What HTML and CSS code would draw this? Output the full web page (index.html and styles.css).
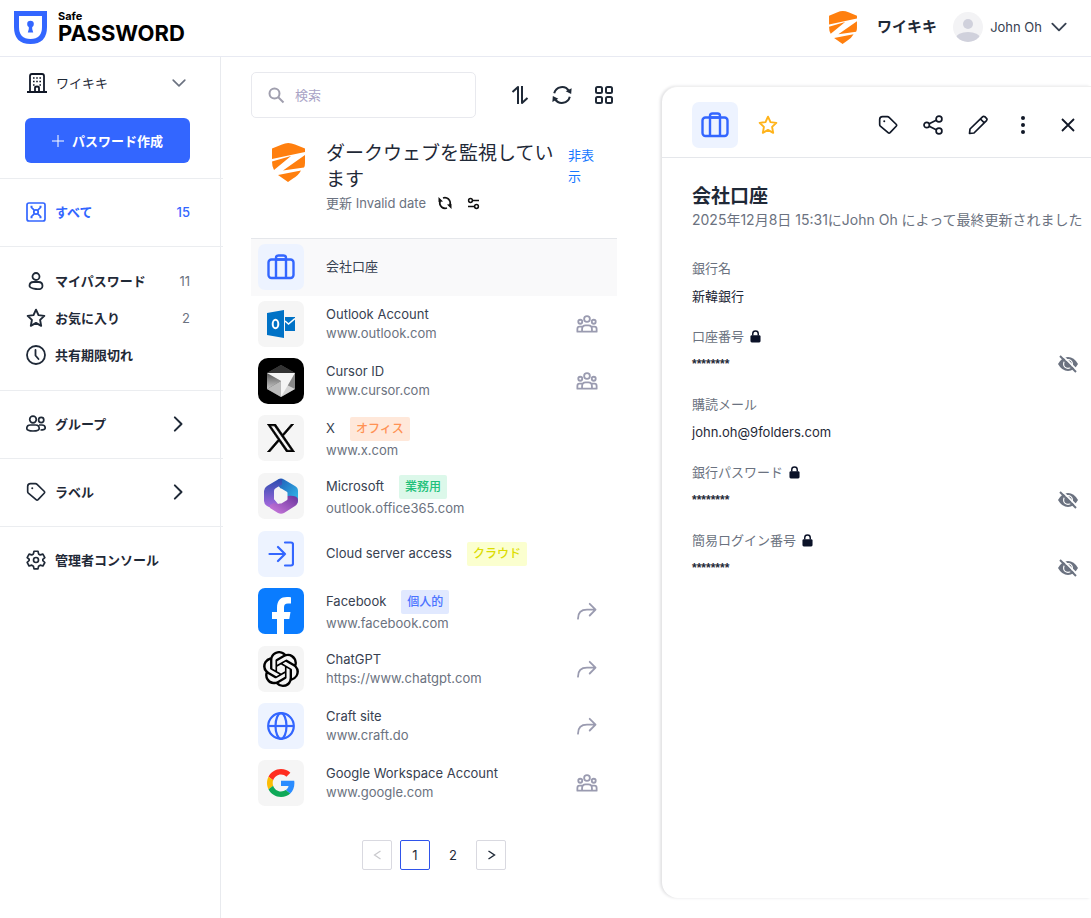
FILE: index.html
```html
<!DOCTYPE html>
<html lang="ja">
<head>
    <meta charset="UTF-8">
    <meta name="viewport" content="width=device-width, initial-scale=1.0">
    <title>Safe PASSWORD</title>
    <link rel="stylesheet" href="styles.css">
</head>
<body>
    <!-- shared icons -->
    <svg class="sprite" aria-hidden="true">
        <symbol id="i-shield" viewBox="0 0 33 39">
            <path fill="#ff7f0e" d="M0 5.500 10 1.500q6-3 13 0L33 5.500v3.500L0 16zM0 18.500 19 13 2 27Q0 24 0 18.500zM33 12v8q0 3-1 4.500L11 27.500zM6 32l23-4.500q-3 5.500-8 8l-5 3.500z"/>
        </symbol>
        <symbol id="i-case" viewBox="0 0 28 26">
            <g fill="none" stroke="#3366ff" stroke-width="2.400"><rect x="1.500" y="5.500" width="25" height="18.500" rx="3"/><path d="M9 24V4q0-2.500 2.500-2.500h5Q19 1.500 19 4v20M9 5.500h10"/></g>
        </symbol>
        <symbol id="i-star" viewBox="0 0 24 24">
            <path fill="none" stroke="currentColor" stroke-width="2.300" stroke-linejoin="round" d="m12 2 3 6.500 7 .9-5.100 4.900 1.300 7.100-6.200-3.500-6.200 3.500 1.300-7.100L2 9.400l7-.9z"/>
        </symbol>
        <symbol id="i-tag" viewBox="0 0 24 24">
            <path fill="none" stroke="currentColor" stroke-width="2" stroke-linejoin="round" d="M2 5.500Q2 2 5.500 2h5.800q1.200 0 2 .8l8.500 8.300q1.200 1.200 0 2.400l-7.300 7.700q-1.200 1.200-2.400 0L2.800 13.300Q2 12.500 2 11.300z"/><circle cx="7.500" cy="7.500" r="1.200" fill="currentColor"/>
        </symbol>
        <symbol id="i-right" viewBox="0 0 24 24"><path fill="none" stroke="currentColor" stroke-width="2.400" stroke-linecap="round" stroke-linejoin="round" d="m7 4 8 8-8 8"/></symbol>
        <symbol id="i-down" viewBox="0 0 24 24"><path fill="none" stroke="currentColor" stroke-width="2.800" stroke-linecap="round" stroke-linejoin="round" d="m2 7 10 10L22 7"/></symbol>
        <symbol id="i-group" viewBox="0 0 24 20">
            <g fill="none" stroke="currentColor" stroke-width="2" stroke-linejoin="round"><circle cx="12" cy="4.500" r="3.200"/><circle cx="4.500" cy="7.500" r="2.200"/><circle cx="19.500" cy="7.500" r="2.200"/><path d="M6.500 18.500v-2.500q0-4.500 4-4.500h3q4 0 4 4.500v2.500zM6.500 18.500H1.300v-3q0-2.500 2.500-2.500h3.400M17.500 18.500h5.200v-3q0-2.500-2.500-2.500h-3.400"/></g>
        </symbol>
        <symbol id="i-share" viewBox="0 0 24 20">
            <path fill="none" stroke="currentColor" stroke-width="2" stroke-linecap="round" stroke-linejoin="round" d="M2 18.500C2 11.500 6 8.500 12 8.500h9M15 2l6.500 6.500L15 15"/>
        </symbol>
        <symbol id="i-lock" viewBox="0 0 12 14">
            <rect x="0.500" y="5.500" width="11" height="8" rx="1.500" fill="#0b1228"/><path d="M3 6V4a3 3 0 0 1 6 0v2" fill="none" stroke="#0b1228" stroke-width="1.600"/>
        </symbol>
        <symbol id="i-hidden" viewBox="0 0 20 18">
            <path fill="#6b7280" d="M0 9Q4 2 10 2t10 7q-4 7-10 7T0 9z"/><circle cx="10" cy="9" r="4.400" fill="none" stroke="#fff" stroke-width="1.200"/><path d="M4.500.5 20 16" stroke="#fff" stroke-width="1.800"/><path d="M2 1 18 17" stroke="#6b7280" stroke-width="2"/>
        </symbol>
        <symbol id="i-refresh" viewBox="0 0 24 24">
            <path fill="none" stroke="currentColor" stroke-width="2.200" d="M3.500 10a8.800 8.800 0 0 1 16-2.500M20.500 14a8.800 8.800 0 0 1-16 2.500"/><path fill="currentColor" d="m22.500 4.500-.5 6.500-6-3zM1.500 19.500l.5-6.500 6 3z"/>
        </symbol>
    </svg>

    <header class="topbar">
        <a class="logo" href="#">
            <svg width="33" height="33" viewBox="0 0 33 33"><path fill="#3366ff" d="M0 0h33v16Q33 33 16.500 33T0 16z"/><path fill="#fff" d="M5 5h23v11q0 12-11.500 12T5 16z"/><circle cx="16.500" cy="13" r="3.300" fill="#3366ff"/><path fill="#3366ff" d="M14.800 14h3.400v4l1 3.500h-5.400l1-3.500z"/></svg>
            <span class="logo-text"><span class="logo-small">Safe</span><span class="logo-big">PASSWORD</span></span>
        </a>
        <div class="account">
            <svg width="28" height="33"><use href="#i-shield"/></svg>
            <strong class="org">ワイキキ</strong>
            <button class="user" type="button">
                <svg width="30" height="30" viewBox="0 0 30 30"><defs><clipPath id="round"><circle cx="15" cy="15" r="15"/></clipPath></defs><g clip-path="url(#round)"><path fill="#f3f3f5" d="M0 0h30v30H0z"/><circle cx="15" cy="12" r="5" fill="#d0d1dc"/><ellipse cx="15" cy="26" rx="12" ry="6" fill="#d0d1dc"/></g></svg>
                <span>John Oh</span>
                <svg width="16" height="16"><use href="#i-down"/></svg>
            </button>
        </div>
    </header>

    <div class="layout">
        <nav class="sidebar">
            <div class="side-top">
                <button class="company" type="button">
                    <svg width="20" height="20" viewBox="0 0 20 20"><g fill="none" stroke="#111827" stroke-width="1.800"><path d="M3 18.500V3q0-2 2-2h10q2 0 2 2v15.500M0 19h20M8 19v-4q0-1.500 2-1.500t2 1.500v4"/></g><path stroke="#111827" stroke-width="1.500" d="M6 5h1.600M9.200 5h1.600M12.400 5H14M6 8.500h1.600M9.200 8.500h1.600M12.400 8.500H14M6 12h1.600M12.400 12H14"/></svg>
                    <span>ワイキキ</span>
                    <svg class="end gray" width="14" height="14"><use href="#i-down"/></svg>
                </button>
                <button class="create" type="button">
                    <svg width="12" height="12" viewBox="0 0 12 12"><path stroke="#fff" stroke-width="1" d="M6 0v12M0 6h12"/></svg>
                    パスワード作成
                </button>
            </div>
            <div class="side-group">
                <a class="side-link active" href="#">
                    <svg width="20" height="20" viewBox="0 0 20 20"><g fill="none" stroke="currentColor" stroke-width="1.700"><rect x="1" y="1" width="18" height="18" rx="2"/><path d="m5 5 3.200 3.200M15 5l-3.200 3.200M5 15l3.200-3.200M15 15l-3.200-3.200M4.500 4.500h2M15.500 4.500h-2M4.500 15.500h2M15.500 15.500h-2"/><circle cx="10" cy="10" r="2.200"/></g></svg>
                    <span>すべて</span><span class="count">15</span>
                </a>
            </div>
            <div class="side-group tall">
                <a class="side-link" href="#">
                    <svg width="20" height="20" viewBox="0 0 20 20"><g fill="none" stroke="currentColor" stroke-width="1.800"><circle cx="10" cy="5.500" r="3.500"/><path d="M3.500 15q0-4 4-4h5q4 0 4 4t-6.500 3-6.500-3z"/></g></svg>
                    <span>マイパスワード</span><span class="count">11</span>
                </a>
                <a class="side-link" href="#">
                    <svg width="20" height="20"><use href="#i-star"/></svg>
                    <span>お気に入り</span><span class="count">2</span>
                </a>
                <a class="side-link" href="#">
                    <svg width="20" height="20" viewBox="0 0 20 20"><g fill="none" stroke="currentColor" stroke-width="1.800" stroke-linecap="round"><circle cx="10" cy="10" r="9"/><path d="M9.500 5v5.500l3 3.500"/></g></svg>
                    <span>共有期限切れ</span>
                </a>
            </div>
            <div class="side-group">
                <a class="side-link" href="#">
                    <svg width="20" height="20" viewBox="0 0 20 20"><g fill="none" stroke="currentColor" stroke-width="1.700"><circle cx="7" cy="5.500" r="3.300"/><path d="M.8 14.500q0-3.500 3.500-3.500h5.400q3.500 0 3.500 3.500 0 2.500-6.200 2.500T.8 14.500z"/><circle cx="15.200" cy="6" r="2.600"/><path d="M13 11h3q3.200 0 3.200 3 0 2-4.700 2"/></g></svg>
                    <span>グループ</span><svg class="end" width="20" height="20"><use href="#i-right"/></svg>
                </a>
            </div>
            <div class="side-group">
                <a class="side-link" href="#">
                    <svg width="20" height="20"><use href="#i-tag"/></svg>
                    <span>ラベル</span><svg class="end" width="20" height="20"><use href="#i-right"/></svg>
                </a>
            </div>
            <div class="side-group last">
                <a class="side-link" href="#">
                    <svg width="20" height="20" viewBox="0 0 24 24"><g fill="none" stroke="currentColor" stroke-width="2" stroke-linejoin="round"><circle cx="12" cy="12" r="3"/><path d="M9.600 1.500h4.800l.7 3.200 2 1.200 3.200-1 2.300 4.200-2.400 2.200v1.500l2.400 2.200-2.300 4.200-3.200-1-2 1.200-.7 3.200H9.600l-.7-3.200-2-1.200-3.200 1L1.400 14.800l2.400-2.200v-1.500L1.400 9.100l2.300-4.200 3.200 1 2-1.200z"/></g></svg>
                    <span>管理者コンソール</span>
                </a>
            </div>
        </nav>

        <main class="list-pane">
            <div class="toolbar">
                <label class="search">
                    <svg width="17" height="17" viewBox="0 0 17 17"><g fill="none" stroke="#a09fae" stroke-width="2"><circle cx="6.500" cy="6.500" r="5"/><path d="m10 10 5.500 5.500"/></g></svg>
                    <input type="text" placeholder="検索" aria-label="検索">
                </label>
                <div class="tools">
                    <button type="button" aria-label="並べ替え"><svg width="18" height="20" viewBox="0 0 18 20"><path fill="none" stroke="currentColor" stroke-width="2" stroke-linejoin="round" d="M1.500 7 7 2v17M11 1v17l5.500-5"/></svg></button>
                    <button type="button" aria-label="更新"><svg width="22" height="22"><use href="#i-refresh"/></svg></button>
                    <button type="button" aria-label="グリッド表示"><svg width="18" height="18" viewBox="0 0 18 18"><g fill="none" stroke="currentColor" stroke-width="2"><rect x="1" y="1" width="6" height="6" rx="1.500"/><rect x="11" y="1" width="6" height="6" rx="1.500"/><rect x="1" y="11" width="6" height="6" rx="1.500"/><rect x="11" y="11" width="6" height="6" rx="1.500"/></g></svg></button>
                </div>
            </div>

            <section class="monitor">
                <svg class="monitor-icon" width="33" height="39"><use href="#i-shield"/></svg>
                <div class="monitor-body">
                    <h2>ダークウェブを監視しています</h2>
                    <div class="monitor-sub">
                        <span>更新 Invalid date</span>
                        <button type="button" aria-label="再読み込み"><svg width="14" height="14" viewBox="0 0 14 14"><path fill="none" stroke="#111" stroke-width="1.700" d="M5 2q3-1 5.500 1Q13 5.500 12 9M9 12q-3 1-5.500-1Q1 8.500 2 5"/><path fill="#111" d="M.5 1v5L5 5.500zM13.500 13V8L9 8.500z"/></svg></button>
                        <button type="button" aria-label="設定"><svg width="13" height="13" viewBox="0 0 13 13"><g fill="none" stroke="#111" stroke-width="1.500"><circle cx="3.500" cy="3.500" r="1.900"/><path d="M5.500 3.500H12M1 9.500h6.500"/><circle cx="9.500" cy="9.500" r="1.900"/></g></svg></button>
                    </div>
                </div>
                <a class="hide-link" href="#">非表示</a>
            </section>

            <ul class="items">
                <li><a class="item selected" href="#">
                    <span class="tile blue"><svg width="28" height="26"><use href="#i-case"/></svg></span>
                    <span class="item-text"><span class="name">会社口座</span></span>
                </a></li>
                <li><a class="item" href="#">
                    <span class="tile"><svg width="28" height="28" viewBox="0 0 28 28"><path fill="#0072c6" d="M0 3 17 0v28L0 25zM18 7h10v14H18z"/><ellipse cx="8.500" cy="14" rx="2.800" ry="4.300" fill="none" stroke="#fff" stroke-width="2"/><path fill="none" stroke="#fff" stroke-width="1.600" d="m18 11 3.500 3L28 8.500"/></svg></span>
                    <span class="item-text"><span class="name">Outlook Account</span><span class="url">www.outlook.com</span></span>
                    <svg class="state" width="22" height="18"><use href="#i-group"/></svg>
                </a></li>
                <li><a class="item" href="#">
                    <span class="tile black"><svg width="28" height="32" viewBox="0 0 28 32"><defs><linearGradient id="cube" x1="0" y1="0" x2="0" y2="1"><stop offset="0" stop-color="#555"/><stop offset="1" stop-color="#c8c8c8"/></linearGradient></defs><path fill="#555" d="m14 0 14 8v16l-14 8L0 24V8z"/><path fill="#333" d="m14 0 14 8H0z"/><path fill="url(#cube)" d="M0 8v16l14-8z"/><path fill="#bbb" d="m0 24 14-8v16z"/><path fill="#888" d="M28 8v16l-9-2z"/><path fill="#d5d5d5" d="m14 32 14-8-10-5z"/><path fill="#f5f5f5" d="M0 8h28L14 32V16z"/></svg></span>
                    <span class="item-text"><span class="name">Cursor ID</span><span class="url">www.cursor.com</span></span>
                    <svg class="state" width="22" height="18"><use href="#i-group"/></svg>
                </a></li>
                <li><a class="item tagged" href="#">
                    <span class="tile"><svg width="28" height="28" viewBox="0 0 24 24"><path stroke="#000" stroke-width="0.600" d="M14.234 10.162 22.977 0h-2.072l-7.591 8.824L7.251 0H.258l9.168 13.343L.258 24H2.330l8.016-9.318L16.749 24h6.993zm-2.837 3.299-.929-1.329L3.076 1.560h3.182l5.965 8.532.929 1.329 7.754 11.090h-3.182z"/></svg></span>
                    <span class="item-text"><span class="name">X<span class="tag orange">オフィス</span></span><span class="url">www.x.com</span></span>
                </a></li>
                <li><a class="item tagged" href="#">
                    <span class="tile"><svg width="34" height="36" viewBox="0 0 34 36"><defs><linearGradient id="ms1" x1="0" y1="0" x2="0" y2="1"><stop offset="0" stop-color="#2b4db0"/><stop offset="1" stop-color="#b06be0"/></linearGradient><linearGradient id="ms2" x1="0" y1="0" x2="1" y2="1"><stop offset="0" stop-color="#1d58b5"/><stop offset="1" stop-color="#35c0ee"/></linearGradient><linearGradient id="ms3" x1="1" y1="0" x2="0" y2="1"><stop offset="0" stop-color="#69339c"/><stop offset="1" stop-color="#cf7de0"/></linearGradient></defs><path fill="url(#ms2)" d="m14 1.500q3-2 6 0L31 8q3 1.500 3 5v9q0 3-2 4l-9-6v-5l-6-4-4-5z"/><path fill="url(#ms1)" d="M14 1.500 3 8q-3 2-3 5v10q0 3 3 5l6 3 5-5-4-5v-8q0-2 2-3l6-3.500V1z"/><path fill="url(#ms3)" d="m6 30 8 5q3 1.500 6 0l11-7q3-2 3-6 0-5-11-4v3l-6 4q-4 2-7 0l-4 2z"/><path fill="#f5f5f5" d="m17 12 5 3v6l-5 3-5-3v-6z" stroke="#f5f5f5" stroke-width="3" stroke-linejoin="round"/></svg></span>
                    <span class="item-text"><span class="name">Microsoft<span class="tag green">業務用</span></span><span class="url">outlook.office365.com</span></span>
                </a></li>
                <li><a class="item" href="#">
                    <span class="tile blue"><svg width="26" height="26" viewBox="0 0 26 26"><path fill="none" stroke="#3366ff" stroke-width="2.200" stroke-linecap="round" stroke-linejoin="round" d="M1.500 13H17M10 6l7 7-7 7M17 1.500h6q2 0 2 2v19q0 2-2 2h-6"/></svg></span>
                    <span class="item-text"><span class="name">Cloud server access<span class="tag yellow">クラウド</span></span></span>
                </a></li>
                <li><a class="item tagged" href="#">
                    <span class="tile facebook"><svg width="46" height="46" viewBox="0 0 46 46"><path fill="#fff" d="M19 46V31h-5v-7h5v-4c0-8 4-11 10-11 2 0 3 0 4 .3v6.200h-3c-3 0-4 1.500-4 4V24h6.500l-1.200 7H26v15z"/></svg></span>
                    <span class="item-text"><span class="name">Facebook<span class="tag indigo">個人的</span></span><span class="url">www.facebook.com</span></span>
                    <svg class="state" width="22" height="18"><use href="#i-share"/></svg>
                </a></li>
                <li><a class="item" href="#">
                    <span class="tile"><svg width="36" height="36" viewBox="0 0 24 24"><path d="M22.2819 9.8211a5.9847 5.9847 0 0 0-.5157-4.9108 6.0462 6.0462 0 0 0-6.5098-2.9A6.0651 6.0651 0 0 0 4.9807 4.1818a5.9847 5.9847 0 0 0-3.9977 2.9 6.0462 6.0462 0 0 0 .7427 7.0966 5.98 5.98 0 0 0 .511 4.9107 6.051 6.051 0 0 0 6.5146 2.9001A5.9847 5.9847 0 0 0 13.2599 24a6.0557 6.0557 0 0 0 5.7718-4.2058 5.9894 5.9894 0 0 0 3.9977-2.9001 6.0557 6.0557 0 0 0-.7475-7.0729zm-9.022 12.6081a4.4755 4.4755 0 0 1-2.8764-1.0408l.1419-.0804 4.7783-2.7582a.7948.7948 0 0 0 .3927-.6813v-6.7369l2.02 1.1686a.071.071 0 0 1 .038.052v5.5826a4.504 4.504 0 0 1-4.4945 4.4944zm-9.6607-4.1254a4.4708 4.4708 0 0 1-.5346-3.0137l.142.0852 4.783 2.7582a.7712.7712 0 0 0 .7806 0l5.8428-3.3685v2.3324a.0804.0804 0 0 1-.0332.0615L9.74 19.9502a4.4992 4.4992 0 0 1-6.1408-1.6464zM2.3408 7.8956a4.485 4.485 0 0 1 2.3655-1.9728V11.6a.7664.7664 0 0 0 .3879.6765l5.8144 3.3543-2.0201 1.1685a.0757.0757 0 0 1-.071 0l-4.8303-2.7865A4.504 4.504 0 0 1 2.3408 7.872zm16.5963 3.8558L13.1038 8.364 15.1192 7.2a.0757.0757 0 0 1 .071 0l4.8303 2.7913a4.4944 4.4944 0 0 1-.6765 8.1042v-5.6772a.79.79 0 0 0-.407-.667zm2.0107-3.0231l-.142-.0852-4.7735-2.7818a.7759.7759 0 0 0-.7854 0L9.409 9.2297V6.8974a.0662.0662 0 0 1 .0284-.0615l4.8303-2.7866a4.4992 4.4992 0 0 1 6.6802 4.66zM8.3065 12.863l-2.02-1.1638a.0804.0804 0 0 1-.038-.0567V6.0742a4.4992 4.4992 0 0 1 7.3757-3.4537l-.142.0805L8.704 5.459a.7948.7948 0 0 0-.3927.6813zm1.0976-2.3654l2.602-1.4998 2.6069 1.4998v2.9994l-2.5974 1.4997-2.6067-1.4997Z"/></svg></span>
                    <span class="item-text"><span class="name">ChatGPT</span><span class="url">https://www.chatgpt.com</span></span>
                    <svg class="state" width="22" height="18"><use href="#i-share"/></svg>
                </a></li>
                <li><a class="item" href="#">
                    <span class="tile blue"><svg width="28" height="28" viewBox="0 0 28 28"><g fill="none" stroke="#3366ff" stroke-width="2.200"><circle cx="14" cy="14" r="12.800"/><ellipse cx="14" cy="14" rx="5.500" ry="12.800"/><path d="M1 14h26"/></g></svg></span>
                    <span class="item-text"><span class="name">Craft site</span><span class="url">www.craft.do</span></span>
                    <svg class="state" width="22" height="18"><use href="#i-share"/></svg>
                </a></li>
                <li><a class="item" href="#">
                    <span class="tile"><svg width="28" height="28" viewBox="0 0 48 48"><path fill="#ff2d20" d="M24 9.500c3.540 0 6.710 1.220 9.210 3.600l6.850-6.850C35.900 2.380 30.470 0 24 0 14.620 0 6.510 5.380 2.560 13.220l7.980 6.190C12.430 13.720 17.740 9.500 24 9.500z"/><path fill="#2a8cff" d="M46.980 24.550c0-1.570-.15-3.090-.38-4.550H24v9.020h12.940c-.58 2.960-2.260 5.480-4.780 7.180l7.730 6c4.510-4.180 7.090-10.360 7.090-17.650z"/><path fill="#fbbc05" d="M10.530 28.590c-.48-1.450-.76-2.990-.76-4.590s.27-3.140.76-4.590l-7.980-6.190C.92 16.460 0 20.120 0 24c0 3.880.92 7.540 2.560 10.780z"/><path fill="#0fa958" d="M24 48c6.480 0 11.930-2.130 15.890-5.810l-7.730-6c-2.150 1.450-4.920 2.300-8.160 2.300-6.260 0-11.570-4.220-13.470-9.910l-7.980 6.190C6.510 42.620 14.620 48 24 48z"/></svg></span>
                    <span class="item-text"><span class="name">Google Workspace Account</span><span class="url">www.google.com</span></span>
                    <svg class="state" width="22" height="18"><use href="#i-group"/></svg>
                </a></li>
            </ul>

            <div class="pager">
                <button type="button" disabled aria-label="前へ"><svg width="9" height="10" viewBox="0 0 9 10"><path fill="none" stroke="currentColor" stroke-width="1.200" d="M7.500 1 1.500 5l6 4"/></svg></button>
                <button class="current" type="button">1</button>
                <button class="plain" type="button">2</button>
                <button type="button" aria-label="次へ"><svg width="9" height="10" viewBox="0 0 9 10"><path fill="none" stroke="currentColor" stroke-width="1.400" d="m1.500 1 6 4-6 4"/></svg></button>
            </div>
        </main>

        <section class="detail">
            <div class="detail-head">
                <span class="tile blue"><svg width="28" height="26"><use href="#i-case"/></svg></span>
                <button class="fav" type="button" aria-label="お気に入り"><svg width="20" height="20"><use href="#i-star"/></svg></button>
                <div class="actions">
                    <button type="button" aria-label="ラベル"><svg width="20" height="20"><use href="#i-tag"/></svg></button>
                    <button type="button" aria-label="共有"><svg width="20" height="20" viewBox="0 0 20 20"><g fill="none" stroke="currentColor" stroke-width="1.700"><circle cx="3.700" cy="10" r="2.700"/><circle cx="16" cy="4" r="2.900"/><circle cx="16" cy="16" r="2.900"/><path d="m6.200 8.800 7-3.500M6.200 11.200l7 3.500"/></g></svg></button>
                    <button type="button" aria-label="編集"><svg width="20" height="20" viewBox="0 0 20 20"><path fill="none" stroke="currentColor" stroke-width="1.700" stroke-linejoin="round" d="M1.500 18.500 2 14 14.500 1.800q1-1 2.500 0l1.500 1.500q1 1 0 2.300L6 18zM12.500 4l3.800 3.800"/></svg></button>
                    <button type="button" aria-label="その他"><svg width="6" height="20" viewBox="0 0 6 20"><g fill="currentColor"><circle cx="3" cy="3" r="2"/><circle cx="3" cy="10" r="2"/><circle cx="3" cy="17" r="2"/></g></svg></button>
                    <button type="button" aria-label="閉じる"><svg width="14" height="14" viewBox="0 0 14 14"><path stroke="currentColor" stroke-width="1.800" d="m1 1 12 12M13 1 1 13"/></svg></button>
                </div>
            </div>
            <div class="detail-body">
                <h1>会社口座</h1>
                <p class="updated">2025年12月8日 15:31にJohn Oh によって最終更新されました</p>
                <dl class="fields">
                    <div class="field"><dt>銀行名</dt><dd>新韓銀行</dd></div>
                    <div class="field"><dt>口座番号<svg width="11" height="13"><use href="#i-lock"/></svg></dt><dd><span class="secret">********</span><button type="button" aria-label="表示"><svg width="20" height="18"><use href="#i-hidden"/></svg></button></dd></div>
                    <div class="field"><dt>購読メール</dt><dd>john.oh@9folders.com</dd></div>
                    <div class="field"><dt>銀行パスワード<svg width="11" height="13"><use href="#i-lock"/></svg></dt><dd><span class="secret">********</span><button type="button" aria-label="表示"><svg width="20" height="18"><use href="#i-hidden"/></svg></button></dd></div>
                    <div class="field"><dt>簡易ログイン番号<svg width="11" height="13"><use href="#i-lock"/></svg></dt><dd><span class="secret">********</span><button type="button" aria-label="表示"><svg width="20" height="18"><use href="#i-hidden"/></svg></button></dd></div>
                </dl>
            </div>
        </section>
    </div>
</body>
</html>
```

FILE: styles.css
```css
* {
    box-sizing: border-box;
}

body {
    display: flex;
    flex-direction: column;
    min-height: 100vh;
    margin: 0;
    font-family: Inter, "Noto Sans CJK JP", sans-serif;
    font-size: 13px;
    line-height: 20px;
    color: #1f2937;
    background-color: #ffffff;
    overflow-x: hidden;
}

svg {
    display: block;
    flex: none;
}

.sprite {
    position: absolute;
    width: 0;
    height: 0;
}

a {
    color: inherit;
    text-decoration: none;
}

button {
    display: flex;
    align-items: center;
    justify-content: center;
    padding: 0;
    border: none;
    background: none;
    font: inherit;
    color: inherit;
    cursor: pointer;
}

h1, h2, p, ul, dl, dd {
    margin: 0;
    padding: 0;
}

/* top bar */
.topbar {
    display: flex;
    align-items: center;
    justify-content: space-between;
    height: 57px;
    padding: 0 24px 2px 14px;
    border-bottom: 1px solid #e8eaf2;
}

.logo {
    display: flex;
    align-items: center;
    gap: 11px;
    color: #000000;
}

.logo-text {
    display: flex;
    flex-direction: column;
    font-weight: 700;
}

.logo-small {
    font-size: 11px;
    line-height: 12px;
}

.logo-big {
    font-size: 22px;
    line-height: 22px;
}

.account {
    display: flex;
    align-items: center;
}

.org {
    margin: 0 16px 0 20px;
    font-size: 15px;
}

.user {
    gap: 7px;
    color: #374151;
}

.user span {
    margin-right: 2px;
}

/* page columns */
.layout {
    flex: 1;
    display: grid;
    grid-template-columns: 221px 441px minmax(0, 1fr);
}

/* sidebar */
.sidebar {
    border-right: 1px solid #e8eaee;
}

.side-top {
    margin-right: -3px;
    padding: 7px 33px 15px 25px;
    border-bottom: 1px solid #ebedf0;
}

.company {
    width: 100%;
    height: 37px;
    justify-content: flex-start;
    gap: 9px;
    padding: 0 4px 0 2px;
}

.end {
    margin-left: auto;
}

.gray {
    color: #6b7280;
}

.create {
    width: 100%;
    height: 45px;
    margin-top: 17px;
    gap: 8px;
    border-radius: 6px;
    background-color: #3366ff;
    color: #ffffff;
    font-weight: 700;
}

.side-group {
    margin-right: -3px;
    padding: 14px 33px 16px 26px;
    border-bottom: 1px solid #ebedf0;
}

.side-group.tall {
    padding-top: 15px;
    padding-bottom: 17px;
}

.side-group.last {
    border-bottom: none;
}

.side-link {
    display: flex;
    align-items: center;
    gap: 9px;
    height: 37px;
    font-weight: 700;
}

.side-link .end {
    margin-right: 1px;
}

.side-link.active {
    color: #3366ff;
}

.count {
    margin-left: auto;
    font-weight: 400;
    color: #6b7280;
}

.active .count {
    font-weight: 500;
    color: #3366ff;
}

/* list */
.list-pane {
    padding: 15px 45px 20px 30px;
}

.toolbar {
    display: flex;
    align-items: center;
    justify-content: space-between;
}

.search {
    display: flex;
    align-items: center;
    gap: 10px;
    width: 225px;
    height: 46px;
    padding: 0 16px;
    border: 1px solid #e8e9ee;
    border-radius: 5px;
}

.search input {
    width: 100%;
    border: none;
    outline: none;
    padding: 0;
    font: inherit;
}

.search input::placeholder {
    color: #a9a3c6;
    opacity: 1;
}

.tools, .actions {
    display: flex;
    gap: 18px;
}

.tools {
    margin-right: 1px;
}

.tools button, .actions button {
    width: 24px;
    height: 24px;
}

.monitor {
    display: flex;
    align-items: flex-start;
    padding: 23px 0 25px 21px;
}

.monitor-icon {
    margin: 2px 21px 0 0;
}

.monitor-body {
    flex: 1;
}

.monitor h2 {
    font-size: 19px;
    font-weight: 400;
    line-height: 26px;
}

.monitor-sub {
    display: flex;
    align-items: center;
    gap: 10px;
    height: 20px;
    color: #6b7280;
}

.monitor-sub button {
    width: 18px;
}

.hide-link {
    width: 30px;
    margin: 4px 19px 0 12px;
    line-height: 21px;
    color: #1677ff;
}

.items {
    list-style: none;
    border-top: 1px solid #e5e7eb;
}

.item {
    display: flex;
    align-items: center;
    min-height: 57px;
    padding: 4px 19px 6px 7px;
}

.item.tagged {
    min-height: 58px;
}

.item.selected {
    background-color: #f9f9fa;
}

.tile {
    display: flex;
    flex: none;
    align-items: center;
    justify-content: center;
    width: 46px;
    height: 46px;
    border-radius: 7px;
    background-color: #f5f5f5;
}

.tile.blue {
    background-color: #edf3ff;
}

.tile.black {
    border-radius: 10px;
    background-color: #000000;
}

.tile.facebook {
    background-color: #0a7cff;
}

.item-text {
    flex: 1;
    margin-left: 22px;
    line-height: 19px;
}

.name {
    display: flex;
    align-items: center;
    color: #374151;
}

.url {
    display: block;
    color: #6b7280;
}

.tag {
    margin-left: 15px;
    padding: 0 6px;
    border-radius: 2px;
    font-size: 12px;
    line-height: 24px;
    font-weight: 500;
}

.tag.orange {
    background-color: #ffe8da;
    color: #ff9254;
}

.tag.green {
    background-color: #dcf8ea;
    color: #21c17a;
}

.tag.yellow {
    background-color: #fbffcf;
    color: #dcdc00;
}

.tag.indigo {
    background-color: #e1e9ff;
    color: #4b73ff;
}

.state {
    color: #9a9bb0;
}

.pager {
    display: flex;
    justify-content: center;
    gap: 8px;
    margin-top: 28px;
}

.pager button {
    width: 30px;
    height: 30px;
    border: 1px solid #d9d9e0;
    border-radius: 2px;
    background-color: #ffffff;
}

.pager button:disabled {
    color: #c8c8cc;
}

.pager .current {
    border-color: #2f54eb;
}

.pager .plain {
    border-color: transparent;
}

/* detail panel */
.detail {
    margin: 29px 0 20px;
    border-top: 1px solid #f0f0f0;
    border-radius: 16px 0 0 16px;
    box-shadow: -2px 0 3px 0 #e2e2e4;
    background-color: #ffffff;
}

.detail-head {
    display: flex;
    align-items: center;
    height: 71px;
    padding: 5px 11px 0 30px;
    border-bottom: 1px solid #e5e7eb;
}

.fav {
    margin-left: 20px;
    color: #ffb31a;
}

.actions {
    gap: 21px;
    margin-left: auto;
    color: #111827;
}

.detail-body {
    padding: 26px 11px 20px 30px;
}

.detail h1 {
    font-size: 19px;
    line-height: 26px;
}

.updated {
    font-size: 14px;
    line-height: 20px;
    color: #6b7280;
    white-space: nowrap;
}

.fields {
    margin-top: 28px;
}

.field {
    margin-bottom: 20px;
}

.field dt {
    display: flex;
    align-items: center;
    gap: 6px;
    color: #6b7280;
}

.field dd {
    display: flex;
    align-items: center;
    justify-content: space-between;
    height: 20px;
    margin-top: 8px;
}

.field button {
    width: 24px;
}

.secret {
    font-family: "Liberation Sans", Arial, sans-serif;
    font-size: 12px;
    font-weight: 700;
}
```
